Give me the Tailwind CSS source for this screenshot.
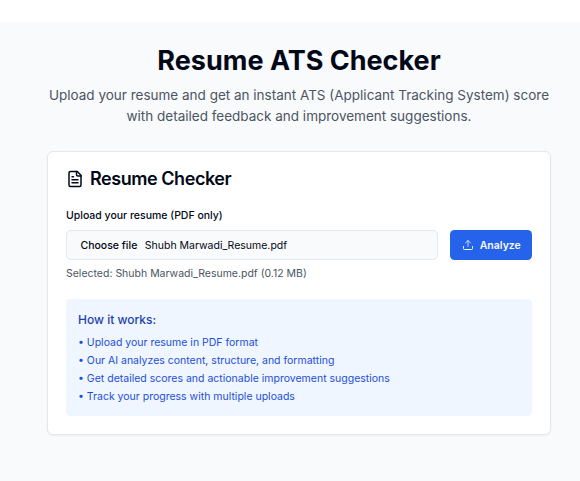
<!DOCTYPE html>
<html lang="en">
<head>
<meta charset="utf-8">
<title>Resume ATS Checker</title>
<script src="https://cdn.jsdelivr.net/npm/@tailwindcss/browser@4"></script>
</head>
<body class="bg-white font-['Inter',sans-serif] text-[#020817] overflow-hidden">
<main class="mt-[22px] h-[459px] bg-[#f9fafb] pt-[24px]">
  <div class="w-[504px] ml-[47px]">
    <header class="text-center mb-6">
      <h1 class="text-[27px] leading-[30px] font-bold mb-[9px]">Resume ATS Checker</h1>
      <p class="text-[13.5px] leading-[21px] text-[#4b5563] whitespace-nowrap">Upload your resume and get an instant ATS (Applicant Tracking System) score<br>with detailed feedback and improvement suggestions.</p>
    </header>
    <section class="h-[284px] bg-white border border-[#e2e8f0] rounded-[6px] shadow-[0_1px_2px_rgba(0,0,0,0.05)] px-[18px] pt-[18px]">
      <h2 class="flex items-center gap-[6px] h-[18px] text-[18px] leading-[18px] font-semibold tracking-[-0.45px]">
        <svg class="size-[18px]" viewBox="0 0 24 24" fill="none" stroke="currentColor" stroke-width="2" stroke-linecap="round" stroke-linejoin="round"><path d="M15 2H6a2 2 0 0 0-2 2v16a2 2 0 0 0 2 2h12a2 2 0 0 0 2-2V7Z"/><path d="M14 2v4a2 2 0 0 0 2 2h4"/><path d="M10 9H8"/><path d="M16 13H8"/><path d="M16 17H8"/></svg>
        Resume Checker
      </h2>
      <label class="block mt-5 mb-[7px] text-[10.5px] leading-[15px] font-medium">Upload your resume (PDF only)</label>
      <div class="flex gap-3">
        <div class="flex flex-1 items-center h-[30px] rounded-[5px] border border-[#e2e8f0] bg-[#f9fafb] pl-[13.5px] text-[10.5px] leading-[15px]">
          <span class="font-medium mr-[7.5px]">Choose file</span><span>Shubh Marwadi_Resume.pdf</span>
        </div>
        <button class="flex items-center justify-center gap-[5.5px] w-[82px] h-[30px] rounded-[4.5px] bg-[#2563eb] text-[#f8fafc] text-[10.5px] leading-[15px] font-semibold pl-[1px]">
          <svg class="size-3" viewBox="0 0 24 24" fill="none" stroke="currentColor" stroke-width="2" stroke-linecap="round" stroke-linejoin="round"><path d="M21 15v4a2 2 0 0 1-2 2H5a2 2 0 0 1-2-2v-4"/><path stroke-opacity="0.75" d="M17 8l-5-5-5 5M12 3v12"/></svg>
          Analyze
        </button>
      </div>
      <p class="mt-[6px] mb-[18px] text-[10.5px] leading-[15px] text-[#4b5563]">Selected: Shubh Marwadi_Resume.pdf (0.12 MB)</p>
      <div class="rounded-[4.5px] bg-[#eff6ff] p-3">
        <h3 class="text-[12px] leading-[18px] font-medium text-[#1e40af] mb-[6px]">How it works:</h3>
        <ul class="space-y-[3px] text-[10.5px] leading-[15px] text-[#1d4ed8]">
          <li>• Upload your resume in PDF format</li>
          <li>• Our AI analyzes content, structure, and formatting</li>
          <li>• Get detailed scores and actionable improvement suggestions</li>
          <li>• Track your progress with multiple uploads</li>
        </ul>
      </div>
    </section>
  </div>
</main>
</body>
</html>
